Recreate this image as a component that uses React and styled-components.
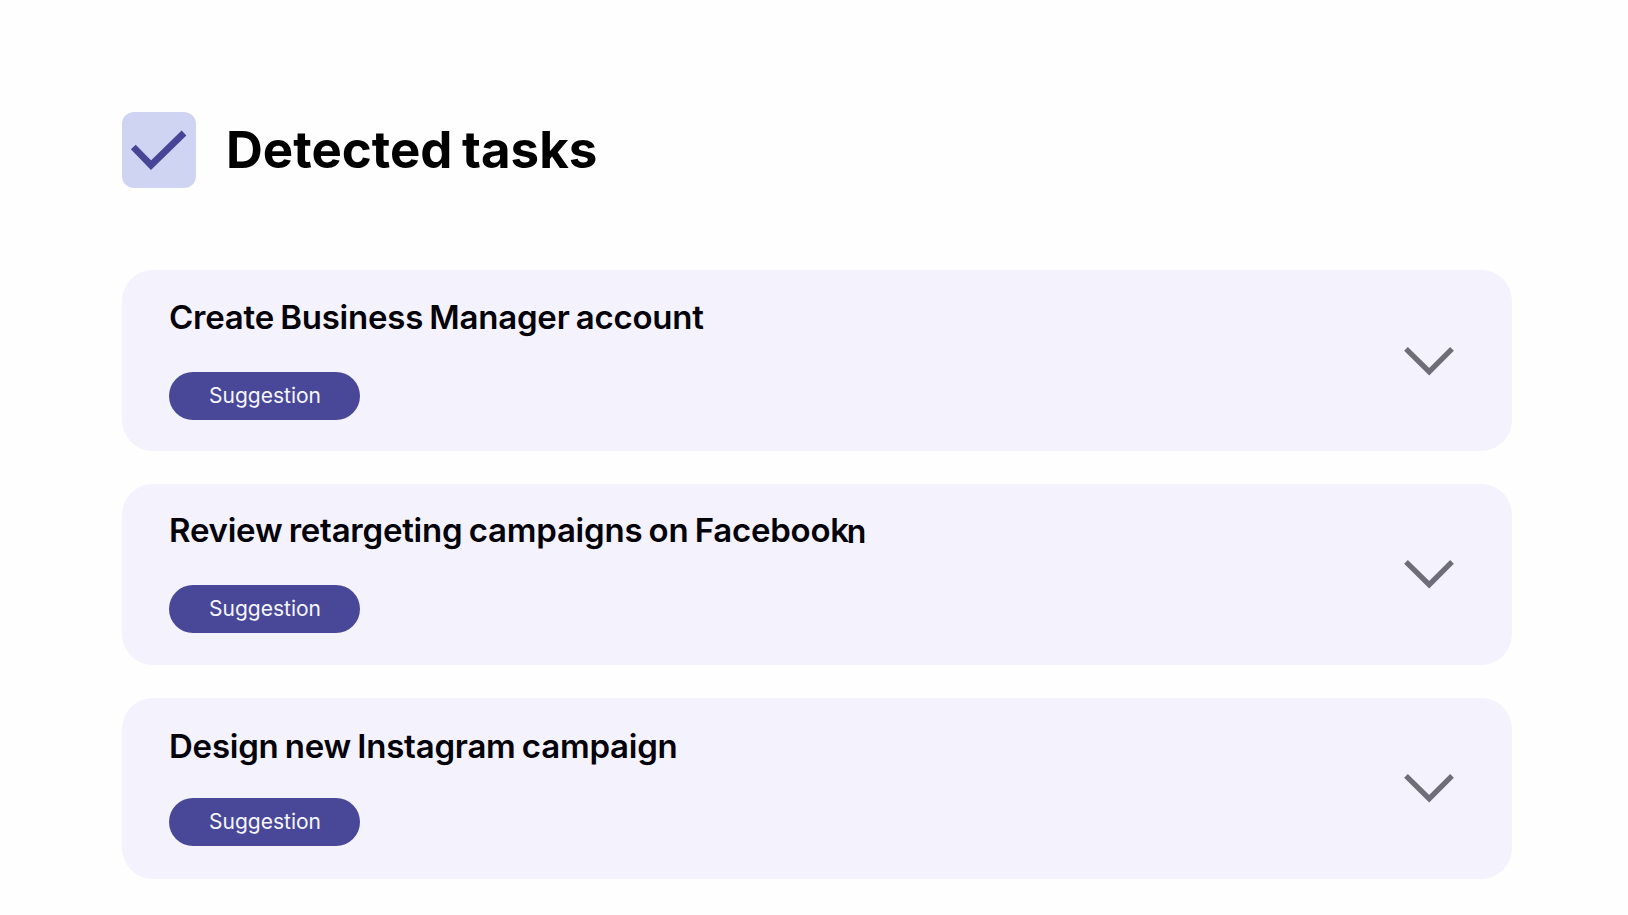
import styled, { createGlobalStyle } from "styled-components"

const GlobalStyle = createGlobalStyle`
  * {
    box-sizing: border-box;
  }

  body {
    margin: 0;
    background-color: #fefefe;
    font-family: "Inter", "Liberation Sans", sans-serif;
    color: #030208;
  }
`

const Container = styled.main`
  height: 915px;
  padding: 112px 116px 0 122px;
  overflow: hidden;
`

const Header = styled.header`
  display: flex;
  align-items: center;
  gap: 30px;
  height: 76px;
`

const CheckBox = styled.div`
  width: 74px;
  height: 76px;
  border-radius: 12px;
  background-color: #d0d4f3;
`

const Title = styled.h1`
  margin: 0;
  padding-bottom: 1px;
  font-size: 51px;
  font-weight: 700;
  line-height: 60px;
  word-spacing: -2.5px;
  color: #000;
`

const TaskList = styled.ul`
  display: flex;
  flex-direction: column;
  gap: 32.75px;
  margin: 82px 0 0;
  padding: 0;
  list-style: none;
`

const Task = styled.li`
  display: flex;
  align-items: center;
  justify-content: space-between;
  height: 181px;
  padding: 0 57px 0 47px;
  border-radius: 31px;
  background-color: #f4f2fd;
`

const TaskBody = styled.div`
  display: flex;
  flex-direction: column;
  align-items: flex-start;
  align-self: flex-start;
  gap: ${props => props.$gap}px;
  padding-top: ${props => props.$top}px;
`

const TaskName = styled.h2`
  display: flex;
  height: 40px;
  margin: 0;
  font-size: 33px;
  font-weight: 600;
  line-height: 40px;
  letter-spacing: -0.23px;
  word-spacing: -1.8px;
  white-space: nowrap;
`

const Typing = styled.span`
  margin-left: -2px;
  padding-top: 2px;
  font-size: 32px;
`

const Tag = styled.span`
  display: flex;
  align-items: center;
  justify-content: center;
  width: 191px;
  height: 48px;
  padding: 0 0 1px 1px;
  border-radius: 24px;
  background-color: #494898;
  color: #f6f6ff;
  font-size: 21px;
  line-height: 26px;
`

const Chevron = styled.svg`
  width: 52px;
  height: 30px;
`

const tasks = [
  { name: "Create Business Manager account", top: 27, gap: 35 },
  { name: "Review retargeting campaigns on Facebook", typing: "n", top: 26.25, gap: 35 },
  { name: "Design new Instagram campaign", top: 28.5, gap: 32 },
]

const App = () => {
  return (
    <Container>
      <GlobalStyle/>
      <Header>
        <CheckBox>
          <svg width="74" height="76" viewBox="0 0 74 76" fill="none">
            <path d="M11.3 35L29 53.2L62 21" stroke="#474596" strokeWidth="6.8"/>
          </svg>
        </CheckBox>
        <Title>Detected tasks</Title>
      </Header>
      <TaskList>
        {tasks.map(task => (
          <Task key={task.name}>
            <TaskBody $top={task.top} $gap={task.gap}>
              <TaskName>
                {task.name}
                {task.typing && <Typing>{task.typing}</Typing>}
              </TaskName>
              <Tag>Suggestion</Tag>
            </TaskBody>
            <Chevron viewBox="0 0 52 30" fill="none">
              <path d="M3 2.9L26.2 25.7L49 2.9" stroke="#706d7a" strokeWidth="5.3"/>
            </Chevron>
          </Task>
        ))}
      </TaskList>
    </Container>
  )
}

export default App
